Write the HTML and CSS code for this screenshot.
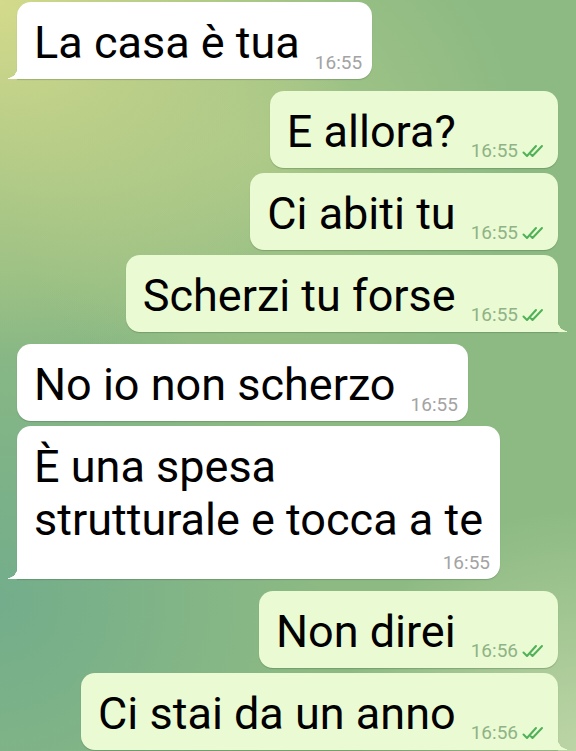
FILE: index.html
```html
<!DOCTYPE html>
<html lang="it">

<head>
    <meta charset="UTF-8">
    <meta name="viewport" content="width=device-width, initial-scale=1.0">
    <title>Chat</title>
    <link rel="stylesheet" href="styles.css">
</head>

<body>
    <main class="chat">
        <div class="msg in tail">
            <span class="text">La casa è tua</span>
            <span class="meta">16:55</span>
        </div>

        <div class="msg out first">
            <span class="text">E allora?</span>
            <span class="meta">16:55 <svg class="check" viewBox="0 0 26 14"><path d="M1.5 8.5 L5 12 L14 2 M10.5 12 L20 2 M9 10.5 L10.5 12"/></svg></span>
        </div>
        <div class="msg out">
            <span class="text">Ci abiti tu</span>
            <span class="meta">16:55 <svg class="check" viewBox="0 0 26 14"><path d="M1.5 8.5 L5 12 L14 2 M10.5 12 L20 2 M9 10.5 L10.5 12"/></svg></span>
        </div>
        <div class="msg out tail">
            <span class="text">Scherzi tu forse</span>
            <span class="meta">16:55 <svg class="check" viewBox="0 0 26 14"><path d="M1.5 8.5 L5 12 L14 2 M10.5 12 L20 2 M9 10.5 L10.5 12"/></svg></span>
        </div>

        <div class="msg in first">
            <span class="text">No io non scherzo</span>
            <span class="meta">16:55</span>
        </div>
        <div class="msg in tail">
            <span class="text">È una spesa strutturale e tocca a te</span>
            <span class="meta">16:55</span>
        </div>

        <div class="msg out first">
            <span class="text">Non direi</span>
            <span class="meta">16:56 <svg class="check" viewBox="0 0 26 14"><path d="M1.5 8.5 L5 12 L14 2 M10.5 12 L20 2 M9 10.5 L10.5 12"/></svg></span>
        </div>
        <div class="msg out tail">
            <span class="text">Ci stai da un anno</span>
            <span class="meta">16:56 <svg class="check" viewBox="0 0 26 14"><path d="M1.5 8.5 L5 12 L14 2 M10.5 12 L20 2 M9 10.5 L10.5 12"/></svg></span>
        </div>
    </main>
</body>
</html>
```

FILE: styles.css
```css
html,
body {
    height: 100%;
}

body {
    margin: 0;
    overflow: hidden;
    font-family: Roboto, 'Noto Sans', sans-serif;
    color: #000;
    background-color: #8dba83;
    background-image:
        radial-gradient(circle at 0 0, #d4da8b 0, rgba(212, 218, 139, 0) 360px),
        radial-gradient(circle at 0 80%, #73ad8b 0, rgba(115, 173, 139, 0) 320px),
        radial-gradient(circle at 100% 100%, #bdd5a6 0, rgba(189, 213, 166, 0) 240px),
        radial-gradient(circle at 45% 20%, #a8c788 0, rgba(168, 199, 136, 0) 260px);
}

.chat {
    display: flex;
    flex-direction: column;
    gap: 5px;
    padding: 2px 18px 0 17px;
}

.msg {
    position: relative;
    display: flex;
    flex-wrap: wrap;
    justify-content: flex-end;
    align-items: flex-end;
    max-width: 456px;
    padding: 14px 10px 10px 17px;
    border-radius: 14px;
    box-shadow: 0 1px 1px rgba(40, 70, 40, 0.25);
}

.msg.first {
    margin-top: 7px;
}

.msg.in {
    align-self: flex-start;
    background: #fff;
}

.msg.out {
    align-self: flex-end;
    background: #eafad2;
}

.text {
    font-size: 45px;
    line-height: 53px;
}

.meta {
    display: flex;
    align-items: center;
    gap: 4px;
    margin: 11px 0 0 15px;
    font-size: 19px;
    line-height: 12px;
    color: #a3a3a3;
    white-space: nowrap;
}

.out .meta {
    color: #8fb386;
}

.check {
    width: 26px;
    height: 14px;
    fill: none;
    stroke: #4fb158;
    stroke-width: 2;
    stroke-linecap: round;
    stroke-linejoin: round;
}

/* bubble tails */
.msg.in.tail {
    border-bottom-left-radius: 0;
}

.msg.out.tail {
    border-bottom-right-radius: 0;
}

.msg.tail::before {
    content: "";
    position: absolute;
    bottom: 0;
    width: 10px;
    height: 14px;
}

.msg.in.tail::before {
    left: -9px;
    background: radial-gradient(10px 13px at 0 0, rgba(255, 255, 255, 0) 98%, #fff 100%);
}

.msg.out.tail::before {
    right: -9px;
    background: radial-gradient(10px 13px at 100% 0, rgba(234, 250, 210, 0) 98%, #eafad2 100%);
}
```
